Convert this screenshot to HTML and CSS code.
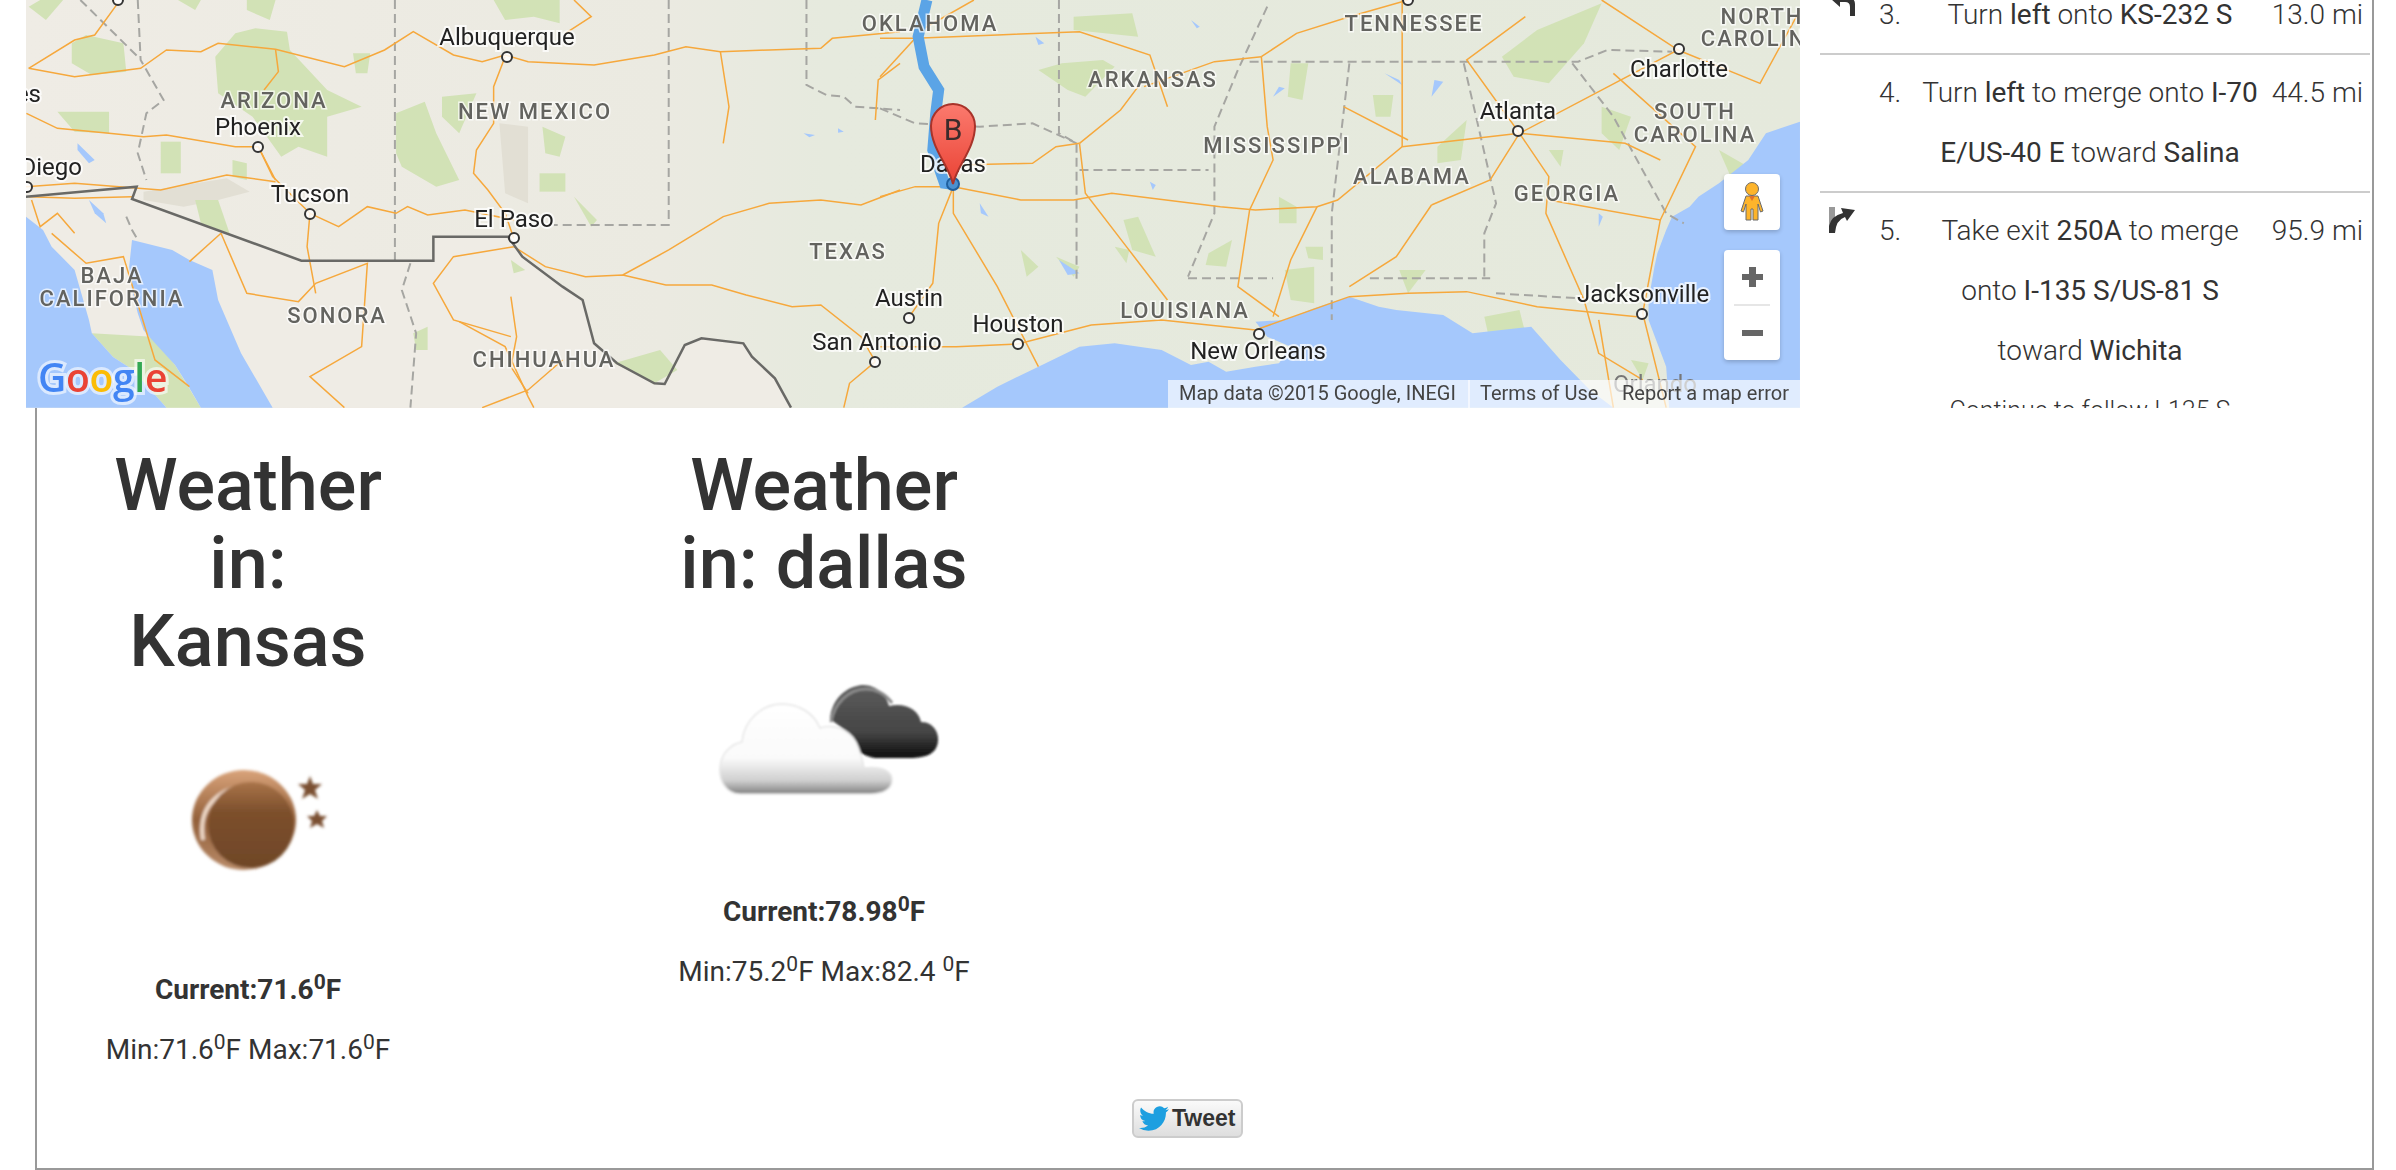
FILE: index.html
```html
<!DOCTYPE html>
<html lang="en">
<head>
    <meta charset="UTF-8">
    <title>Route and Weather</title>
    <link rel="stylesheet" href="styles.css">
</head>
<body>
    <div class="container">
        <div class="route-row">
            <div class="map">
                <svg class="map-svg" viewBox="26 0 1774 408" width="1774" height="408">
                    <defs>
                        <linearGradient id="landTone" x1="0" y1="0" x2="1" y2="0">
                            <stop offset="0" stop-color="#efece5"/>
                            <stop offset="0.36" stop-color="#ebeae1"/>
                            <stop offset="0.45" stop-color="#e6eade"/>
                            <stop offset="1" stop-color="#e5e9dc"/>
                        </linearGradient>
                        <linearGradient id="pinFill" x1="0" y1="0" x2="0" y2="1">
                            <stop offset="0" stop-color="#fb7a6e"/>
                            <stop offset="1" stop-color="#ea4335"/>
                        </linearGradient>
                    </defs>
                    <rect x="26" y="0" width="1774" height="408" fill="url(#landTone)"/>

                    <!-- west half, traced in crop coordinates -->
                    <g transform="scale(.574 .3333)">
                        <polygon class="map-mexico" points="45,590 238,560 230,597 525,782 755,782 755,710 885,710 910,770 980,860 1015,900 1035,1030 1075,1090 1140,1150 1158,1152 1193,1035 1222,1015 1295,1030 1310,1070 1350,1135 1378,1223 45,1223"/>
                        <polygon class="map-desert" points="250,575 395,535 435,575 380,600 320,620 250,600"/>
                        <polygon class="map-desert" points="870,370 920,380 920,610 880,580"/>
                        <polygon class="map-forest" points="125,130 150,105 215,130 220,215 160,225 125,190"/>
                        <polygon class="map-forest" points="410,100 445,85 500,95 505,150 570,270 630,320 570,350 570,470 520,440 490,470 440,350 380,280 375,170"/>
                        <polygon class="map-forest" points="690,340 740,305 760,400 800,540 760,560 700,500 690,460"/>
                        <polygon class="map-forest" points="280,425 315,425 315,520 280,520"/>
                        <polygon class="map-forest" points="945,380 985,410 975,470 950,460"/>
                        <polygon class="map-forest" points="940,520 985,520 985,575 940,575"/>
                        <polygon class="map-forest" points="860,0 975,0 975,70 930,50 880,60"/>
                        <polygon class="map-forest" points="70,0 110,0 80,60 50,20"/>
                        <polygon class="map-forest" points="100,335 190,335 190,400 130,395"/>
                        <polygon class="map-forest" points="770,290 830,280 800,400 770,350"/>
                        <polygon class="map-forest" points="1000,590 1040,660 1030,680"/>
                        <polygon class="map-forest" points="1070,1090 1150,1050 1180,1110 1140,1150"/>
                        <polygon class="map-forest" points="310,0 350,0 340,30"/>
                        <polygon class="map-forest" points="430,0 480,0 470,60 430,30"/>
                        <polygon class="map-forest" points="340,600 380,600 400,700 350,670"/>
                        <polygon class="map-forest" points="405,480 430,490 430,540 405,530"/>
                        <polygon class="map-forest" points="615,160 645,160 640,220 620,220"/>
                        <polygon class="map-forest" points="720,1000 745,980 745,1050 725,1050"/>
                        <polygon class="map-forest" points="890,780 915,810 895,820"/>
                        <polygon class="map-forest" points="160,1000 265,1010 305,1095 350,1223 290,1223 232,1110 197,1071"/>
                        <polygon class="map-water" points="45,650 75,690 90,740 130,810 155,960 160,1000 197,1071 232,1110 290,1223 45,1223"/>
                        <polygon class="map-water" points="230,720 300,750 330,780 370,810 380,900 395,960 420,1060 475,1223 350,1223 325,1150 305,1095 265,1020 250,990 240,940 230,870 225,800"/>
                        <polygon class="map-water" points="135,430 165,480 155,490 135,450"/>
                        <polygon class="map-water" points="155,600 180,640 185,670 165,640"/>
                        <polygon class="map-water" points="1400,400 1420,405 1410,412"/>
                        <polygon class="map-water" points="1460,385 1470,395 1460,398"/>
                        <polyline class="map-border" points="688,0 688,780"/>
                        <polyline class="map-border" points="1165,0 1165,675 965,675"/>
                        <polyline class="map-border" points="1405,0 1405,255 1440,285 1470,290 1490,320 1568,330"/>
                        <polyline class="map-border" points="140,0 240,170"/>
                        <polyline class="map-border" points="240,0 245,180 285,300 255,340 240,460 255,540"/>
                        <polyline class="map-border" points="715,790 700,870 725,1000 715,1223"/>
                        <polyline class="map-border" points="220,650 230,690 240,720"/>
                        <polyline class="map-road" points="50,205 130,230 245,205 290,150 350,155 380,130 480,148 600,200 670,150 720,95 790,165 840,185 880,165 920,185 1035,195 1140,165 1195,140 1255,155 1340,150 1430,145 1450,115 1568,95"/>
                        <polyline class="map-road" points="50,205 130,120 165,105 205,10"/>
                        <polyline class="map-road" points="880,170 860,260 860,370 830,450 825,520 850,570 880,640 895,715"/>
                        <polyline class="map-road" points="1255,155 1270,320 1260,430"/>
                        <polyline class="map-road" points="46,340 100,385 190,400 250,410 290,405 410,440 450,440 480,540"/>
                        <polyline class="map-road" points="480,148 485,215 460,270"/>
                        <polyline class="map-road" points="450,440 475,530 540,640 535,740 550,880"/>
                        <polyline class="map-road" points="45,560 130,550 280,570 395,525 480,545"/>
                        <polyline class="map-road" points="540,640 590,680 640,620 690,640 710,620 745,645 810,630 895,660"/>
                        <polyline class="map-road" points="895,740 790,770 755,850 790,960 890,1010"/>
                        <polyline class="map-road" points="1085,825 1165,750 1260,650 1340,610 1430,600 1500,615 1568,570"/>
                        <polyline class="map-road" points="895,740 950,800 1020,830 1085,825 1160,855 1240,855 1300,885 1380,920 1430,915 1500,1010 1525,1085"/>
                        <polyline class="map-road" points="1000,0 1030,50 985,100"/>
                        <polyline class="map-road" points="890,890 900,1010 890,1100 920,1180"/>
                        <polyline class="map-road" points="800,965 880,1040 920,1190 930,1223"/>
                        <polyline class="map-road" points="385,700 330,785"/>
                        <polyline class="map-road" points="385,700 430,880 520,905 550,850 640,790 630,1040 540,1130 600,1223"/>
                        <polyline class="map-road" points="50,590 130,595 230,590"/>
                        <polyline class="map-road" points="90,700 150,790 215,770 270,1080 330,1160"/>
                        <polyline class="map-road" points="1525,1085 1480,1150 1470,1223"/>
                        <polyline class="map-road" points="1568,190 1530,240 1525,360"/>
                        <polyline class="map-road" points="55,600 70,680 100,640 130,700"/>
                        <polyline class="map-road" points="980,1080 920,1170 840,1223"/>
                        <polyline class="map-route-border" points="45,590 238,560 230,597 525,782 755,782 755,710 885,710 910,770 980,860 1015,900 1035,1030 1075,1090 1140,1150 1158,1152 1193,1035 1222,1015 1295,1030 1310,1070 1350,1135 1378,1223"/>
                    </g>

                    <!-- east half -->
                    <g transform="translate(880 0) scale(.5867 .3333)">
                        <polygon class="map-forest" points="330,50 430,40 440,110 330,90"/>
                        <polygon class="map-forest" points="270,210 310,190 380,180 400,200 350,290 320,270"/>
                        <polygon class="map-forest" points="680,590 710,620 710,670 680,670"/>
                        <polygon class="map-forest" points="700,190 730,190 720,300 695,290"/>
                        <polygon class="map-forest" points="560,760 600,720 590,800 555,795"/>
                        <polygon class="map-forest" points="840,285 875,285 870,350 845,350"/>
                        <polygon class="map-forest" points="950,440 1000,360 990,480 950,490"/>
                        <polygon class="map-forest" points="1060,170 1120,90 1230,10 1200,130 1140,250 1080,230"/>
                        <polygon class="map-forest" points="1230,320 1280,350 1260,450 1230,400"/>
                        <polygon class="map-forest" points="240,750 270,800 250,830"/>
                        <polygon class="map-forest" points="300,770 340,800 330,830"/>
                        <polygon class="map-forest" points="1030,950 1090,930 1100,1000 1040,1030"/>
                        <polygon class="map-forest" points="690,810 740,800 740,910 700,900"/>
                        <polygon class="map-forest" points="1140,450 1165,450 1160,500"/>
                        <polygon class="map-forest" points="1430,450 1480,500 1450,530"/>
                        <polygon class="map-forest" points="885,810 930,810 900,880"/>
                        <polygon class="map-forest" points="415,660 440,650 470,770 430,750"/>
                        <polygon class="map-forest" points="1280,1080 1310,1090 1300,1140"/>
                        <polygon class="map-forest" points="725,740 755,740 755,780 730,775"/>
                        <polygon class="map-forest" points="400,740 425,750 420,790"/>
                        <polygon class="map-water" points="140,1223 200,1160 270,1100 340,1040 400,1030 480,1050 530,1095 560,1085 590,1115 640,1100 680,1090 700,1040 660,1010 640,965 690,960 740,925 800,890 850,920 880,930 960,945 1010,1000 1110,980 1160,1080 1210,1170 1250,1223"/>
                        <polygon class="map-water" points="1568,365 1510,400 1480,480 1430,550 1395,590 1380,620 1350,650 1340,690 1325,760 1320,800 1310,900 1310,960 1340,1100 1345,1223 1568,1223"/>
                        <polygon class="map-water" points="305,780 340,820 320,825"/>
                        <polygon class="map-water" points="680,260 690,265 670,290"/>
                        <polygon class="map-water" points="860,220 885,240 890,255"/>
                        <polygon class="map-water" points="530,60 545,80 540,85"/>
                        <polygon class="map-water" points="265,110 280,130 270,135"/>
                        <polygon class="map-water" points="945,240 960,245 940,290"/>
                        <polygon class="map-water" points="460,545 470,555 465,570"/>
                        <polygon class="map-water" points="1225,640 1232,650 1225,680"/>
                        <polygon class="map-water" points="170,610 185,650 172,640"/>
                        <polyline class="map-border" points="305,0 305,400 335,430 335,850"/>
                        <polyline class="map-border" points="340,510 560,510"/>
                        <polyline class="map-border" points="630,185 1190,185 1240,150 1350,155"/>
                        <polyline class="map-border" points="800,190 770,640 770,960"/>
                        <polyline class="map-border" points="995,190 1050,610 1030,700 1030,830"/>
                        <polyline class="map-border" points="525,835 670,835"/>
                        <polyline class="map-border" points="835,835 1040,835"/>
                        <polyline class="map-border" points="1050,880 1190,895"/>
                        <polyline class="map-border" points="660,20 610,210 570,380 570,640 525,830"/>
                        <polyline class="map-border" points="0,325 60,370 170,380 260,370 335,430"/>
                        <polyline class="map-border" points="1180,190 1250,350 1340,640 1370,670"/>
                        <polyline class="map-road" points="0,115 60,115 200,105 340,95 460,165 490,320"/>
                        <polyline class="map-road" points="0,230 60,115"/>
                        <polyline class="map-road" points="0,590 60,560 125,560 240,600 330,600 395,580 580,620 640,630 745,620 780,600 890,440 1090,400 1270,430 1330,480"/>
                        <polyline class="map-road" points="340,430 300,440 260,490 130,495"/>
                        <polyline class="map-road" points="340,430 410,330 440,260"/>
                        <polyline class="map-road" points="340,430 350,580 420,740 490,900"/>
                        <polyline class="map-road" points="125,560 125,640 200,860 270,1100"/>
                        <polyline class="map-road" points="125,560 100,670 90,850 50,950"/>
                        <polyline class="map-road" points="0,1040 130,1040 235,1032 360,975 480,960 640,990 800,890 900,880 1000,875 1120,920 1290,950"/>
                        <polyline class="map-road" points="650,170 660,380 670,480 630,630 610,860 680,950"/>
                        <polyline class="map-road" points="650,170 570,185 450,260"/>
                        <polyline class="map-road" points="650,170 710,100 800,50 900,0"/>
                        <polyline class="map-road" points="890,0 890,440"/>
                        <polyline class="map-road" points="745,620 700,780 670,950"/>
                        <polyline class="map-road" points="940,615 880,770 800,860"/>
                        <polyline class="map-road" points="940,615 1040,540 1090,400 1000,180 1100,50"/>
                        <polyline class="map-road" points="1090,400 1140,530 1135,640 1200,900 1225,1060 1300,1140"/>
                        <polyline class="map-road" points="1090,400 1360,150 1230,0"/>
                        <polyline class="map-road" points="1140,600 1330,660 1390,440 1250,220"/>
                        <polyline class="map-road" points="1330,660 1300,940 1340,1223"/>
                        <polyline class="map-road" points="1360,150 1500,250 1568,30"/>
                        <polyline class="map-road" points="790,320 900,420"/>
                        <polyline class="map-road" points="1250,1223 1225,960"/>
                        <polyline class="map-road" points="160,0 60,100"/>
                        <polyline class="map-route" points="80,0 65,110 75,200 100,270 95,340 90,450 110,550 123,553"/>
                    </g>

                    <g class="map-states">
                        <text x="274" y="108">ARIZONA</text>
                        <text x="535" y="119">NEW MEXICO</text>
                        <text x="112" y="283">BAJA</text>
                        <text x="112" y="306">CALIFORNIA</text>
                        <text x="848" y="259">TEXAS</text>
                        <text x="337" y="323">SONORA</text>
                        <text x="544" y="367">CHIHUAHUA</text>
                        <text x="930" y="31">OKLAHOMA</text>
                        <text x="1414" y="31">TENNESSEE</text>
                        <text x="1762" y="24">NORTH</text>
                        <text x="1762" y="46">CAROLINA</text>
                        <text x="1153" y="87">ARKANSAS</text>
                        <text x="1695" y="119">SOUTH</text>
                        <text x="1695" y="142">CAROLINA</text>
                        <text x="1277" y="153">MISSISSIPPI</text>
                        <text x="1412" y="184">ALABAMA</text>
                        <text x="1567" y="201">GEORGIA</text>
                        <text x="1185" y="318">LOUISIANA</text>
                    </g>
                    <g class="map-cities">
                        <text x="507" y="45">Albuquerque</text>
                        <text x="258" y="135">Phoenix</text>
                        <text class="map-end" x="41" y="102">Angeles</text>
                        <text class="map-end" x="82" y="175">San Diego</text>
                        <text x="310" y="202">Tucson</text>
                        <text x="514" y="227">El Paso</text>
                        <text x="909" y="306">Austin</text>
                        <text x="877" y="350">San Antonio</text>
                        <text x="1679" y="77">Charlotte</text>
                        <text x="1518" y="119">Atlanta</text>
                        <text x="953" y="172">Dallas</text>
                        <text x="1643" y="302">Jacksonville</text>
                        <text x="1018" y="332">Houston</text>
                        <text x="1258" y="359">New Orleans</text>
                    </g>
                    <g class="map-dots">
                        <circle cx="507" cy="57" r="5"/>
                        <circle cx="258" cy="147" r="5"/>
                        <circle cx="310" cy="214" r="5"/>
                        <circle cx="514" cy="238" r="5"/>
                        <circle cx="27" cy="187" r="5"/>
                        <circle cx="118" cy="0" r="5"/>
                        <circle cx="875" cy="362" r="5"/>
                        <circle cx="909" cy="318" r="5"/>
                        <circle cx="1018" cy="344" r="5"/>
                        <circle cx="1259" cy="334" r="5"/>
                        <circle cx="1518" cy="131" r="5"/>
                        <circle cx="1679" cy="49" r="5"/>
                        <circle cx="1642" cy="314" r="5"/>
                        <circle cx="1408" cy="0" r="5"/>
                    </g>

                    <!-- route end and marker -->
                    <circle cx="953" cy="184" r="6" fill="#4a90d0" stroke="#1f5f9e" stroke-width="2"/>
                    <path d="M953 184 C949 166 931 148 931 126 A22 22 0 0 1 975 126 C975 148 957 166 953 184 Z" fill="url(#pinFill)" stroke="#a8332a" stroke-width="2"/>
                    <text class="map-pin-label" x="953" y="140">B</text>

                    <!-- logo -->
                    <text class="map-logo" x="38" y="392"><tspan fill="#4285f4">G</tspan><tspan fill="#ea4335">o</tspan><tspan fill="#fbbc05">o</tspan><tspan fill="#4285f4">g</tspan><tspan fill="#34a853">l</tspan><tspan fill="#ea4335">e</tspan></text>

                    <!-- attribution -->
                    <text class="map-orlando" x="1655" y="392">Orlando</text>
                    <rect x="1168" y="380" width="632" height="28" fill="#fff" fill-opacity=".65"/>
                    <rect x="1468" y="380" width="2" height="28" fill="#fff" fill-opacity=".6"/>
                    <text class="map-attr" x="1179" y="400">Map data ©2015 Google, INEGI</text>
                    <text class="map-attr" x="1480" y="400">Terms of Use</text>
                    <text class="map-attr" x="1622" y="400">Report a map error</text>
                </svg>

                <div class="map-control pegman-tile">
                    <svg width="26" height="42" viewBox="0 0 26 42">
                        <circle cx="13" cy="8" r="6.5" fill="#fdb42b" stroke="#6b6b6b" stroke-width="1"/>
                        <path d="M7 15 H19 L24 30 L21.5 31 L19 23 V39 H14 V28 H12 V39 H7 V23 L4.5 31 L2 30 Z" fill="#fdb42b" stroke="#6b6b6b" stroke-width="1"/>
                        <path d="M10 15 H16 L13 20 Z" fill="#e2712b"/>
                    </svg>
                </div>
                <div class="map-control zoom-tile">
                    <div class="zoom-btn"><span class="zoom-plus"></span></div>
                    <div class="zoom-sep"></div>
                    <div class="zoom-btn"><span class="zoom-minus"></span></div>
                </div>
            </div>

            <div class="directions">
                <table class="steps">
                    <tr>
                        <td class="step-icon">
                            <svg class="turn-svg" width="30" height="28" viewBox="0 0 30 28">
                                <path d="M26 28 V16 Q26 9 16 9 H11 V3 L2 11 L11 19 V14 H16 Q21 14 21 19 V28 Z" fill="#333"/>
                            </svg>
                        </td>
                        <td class="step-num">3.</td>
                        <td class="step-text">Turn <b>left</b> onto <b>KS-232 S</b></td>
                        <td class="step-dist">13.0 mi</td>
                    </tr>
                    <tr>
                        <td class="step-icon"></td>
                        <td class="step-num">4.</td>
                        <td class="step-text">Turn <b>left</b> to merge onto <b>I-70 E/US-40 E</b> toward <b>Salina</b></td>
                        <td class="step-dist">44.5 mi</td>
                    </tr>
                    <tr>
                        <td class="step-icon">
                            <svg class="turn-svg-right" width="28" height="27" viewBox="0 0 28 27">
                                <rect x="0" y="0" width="6" height="26" fill="#999"/>
                                <path d="M0 26 V19 Q2 9 14 6 L12 1 L26 3 L18 14 L16 10 Q7 13 6 26 Z" fill="#333"/>
                            </svg>
                        </td>
                        <td class="step-num">5.</td>
                        <td class="step-text">Take exit <b>250A</b> to merge onto <b>I-135 S/US-81 S</b><br>toward <b>Wichita</b>
                            <div class="step-more">Continue to follow I-135 S</div>
                        </td>
                        <td class="step-dist">95.9 mi</td>
                    </tr>
                </table>
            </div>
        </div>

        <div class="weather-row">
            <div class="weather-col">
                <h1>Weather in: Kansas</h1>
                <svg class="weather-icon" width="200" height="259" viewBox="-1 -21 200 259">
                    <defs>
                        <linearGradient id="moonOuter" x1="0" y1="0" x2="0" y2="1">
                            <stop offset="0" stop-color="#d9a37a"/>
                            <stop offset="0.5" stop-color="#93603a"/>
                            <stop offset="1" stop-color="#b88a68"/>
                        </linearGradient>
                        <linearGradient id="moonInner" x1="0" y1="0" x2="0" y2="1">
                            <stop offset="0" stop-color="#a97449"/>
                            <stop offset="0.35" stop-color="#7c4f2c"/>
                            <stop offset="1" stop-color="#6f4627"/>
                        </linearGradient>
                        <filter id="softIcon"><feGaussianBlur stdDeviation="1.6"/></filter>
                    </defs>
                    <g filter="url(#softIcon)">
                        <ellipse cx="95" cy="98" rx="52" ry="50" fill="url(#moonOuter)"/>
                        <path d="M54 118 C48 82 74 60 114 64" fill="none" stroke="#efd9c8" stroke-width="4"/>
                        <circle cx="102" cy="103" r="43" fill="url(#moonInner)"/>
                        <polygon points="161,54 164,62 173,62 166,68 169,77 161,72 153,77 156,68 149,62 158,62" fill="#7a4f30"/>
                        <polygon points="168,88 171,94 178,94 173,99 175,106 168,102 161,106 163,99 158,94 165,94" fill="#7a4f30"/>
                    </g>
                </svg>
                <p class="current">Current:71.6<sup>0</sup>F</p>
                <p class="range">Min:71.6<sup>0</sup>F Max:71.6<sup>0</sup>F</p>
            </div>
            <div class="weather-col">
                <h1>Weather in: dallas</h1>
                <svg class="weather-icon" width="240" height="259" viewBox="-2 -36 240 259">
                    <defs>
                        <linearGradient id="cloudLight" x1="0" y1="0" x2="0" y2="1">
                            <stop offset="0" stop-color="#fff"/>
                            <stop offset="0.6" stop-color="#fafafa"/>
                            <stop offset="0.85" stop-color="#cfcfcf"/>
                            <stop offset="1" stop-color="#808080"/>
                        </linearGradient>
                        <linearGradient id="cloudDark" x1="0" y1="0" x2="0" y2="1">
                            <stop offset="0" stop-color="#5c5c5c"/>
                            <stop offset="0.65" stop-color="#454545"/>
                            <stop offset="1" stop-color="#0c0c0c"/>
                        </linearGradient>
                        <filter id="softCloud"><feGaussianBlur stdDeviation="1.3"/></filter>
                    </defs>
                    <g filter="url(#softCloud)">
                        <path d="M133 61 C135 40 150 28 166 27 C180 27 190 38 192 48 C208 44 222 52 224 64 C238 64 244 78 240 88 C236 98 226 100 210 100 L178 100 C158 96 150 84 148 72 Z" fill="url(#cloudDark)" transform="translate(-9 -1)"/>
                        <path d="M125 63 C128 45 142 30 160 30 C172 30 180 36 186 44" fill="none" stroke="#8a8a8a" stroke-width="3"/>
                        <path d="M34 134 C20 134 13 120 14 108 C15 92 26 84 36 82 C38 60 56 44 76 44 C94 44 108 54 114 68 C126 64 142 68 150 82 C154 90 156 98 158 108 C178 106 186 112 186 120 C186 130 176 134 164 134 Z" fill="url(#cloudLight)" stroke="#e6e6e6" stroke-width="1.5" transform="translate(0 1)"/>
                    </g>
                </svg>
                <p class="current">Current:78.98<sup>0</sup>F</p>
                <p class="range">Min:75.2<sup>0</sup>F Max:82.4 <sup>0</sup>F</p>
            </div>
        </div>

        <a class="tweet" href="#">
            <svg width="30" height="25" viewBox="0 2 24 20"><path d="M23.95 4.57a10 10 0 0 1-2.82.77 4.96 4.96 0 0 0 2.16-2.72c-.95.55-2 .95-3.12 1.17a4.92 4.92 0 0 0-8.38 4.48C7.69 8.09 4.07 6.13 1.64 3.16a4.82 4.82 0 0 0-.66 2.47c0 1.71.87 3.21 2.19 4.1a4.9 4.9 0 0 1-2.23-.61v.06a4.92 4.92 0 0 0 3.95 4.83 4.9 4.9 0 0 1-2.21.08 4.94 4.94 0 0 0 4.6 3.42A9.87 9.87 0 0 1 0 19.54a13.94 13.94 0 0 0 7.55 2.21c9.06 0 14-7.5 14-13.98 0-.21 0-.42-.02-.63a9.94 9.94 0 0 0 2.46-2.55z" fill="#1d9fe0"/></svg>
            Tweet
        </a>
    </div>
</body>
</html>
```

FILE: styles.css
```css
html, body {
    margin: 0;
    height: 100%;
    overflow: hidden;
    background-color: white;
}
body {
    font-family: Roboto, Arial, sans-serif;
    color: #333;
}
.container {
    box-sizing: border-box;
    width: 2339px;
    height: 1170px;
    margin-left: 35px;
    border: 2px solid #999;
    border-top: none;
}
.route-row {
    display: flex;
    height: 408px;
    margin-left: -11px;
}

/* map */
.map {
    position: relative;
    width: 1774px;
    height: 408px;
    flex: none;
    overflow: hidden;
}
.map-svg {
    display: block;
    filter: blur(0.4px);
}
.map-water {
    fill: #a5c8fc;
}
.map-forest {
    fill: #d2e2b6;
    filter: blur(1px);
}
.map-desert {
    fill: #e2dfd4;
}
.map-mexico {
    fill: #efece5;
}
.map-road, .map-border, .map-route, .map-route-border {
    fill: none;
    vector-effect: non-scaling-stroke;
}
.map-road {
    stroke: #f6a83c;
    stroke-width: 1.5;
}
.map-border {
    stroke: #a6a6a2;
    stroke-width: 2;
    stroke-dasharray: 9 5;
}
.map-route {
    stroke: #5ba4e6;
    stroke-width: 11;
}
.map-route-border {
    stroke: #696966;
    stroke-width: 2.5;
}
.map-states text {
    font-size: 22px;
    font-weight: 500;
    letter-spacing: 2px;
    fill: #63635f;
    text-anchor: middle;
    stroke: #fff;
    stroke-opacity: .7;
    stroke-width: 3px;
    paint-order: stroke;
}
.map-cities text {
    font-size: 24px;
    fill: #222;
    text-anchor: middle;
    stroke: #fff;
    stroke-opacity: .75;
    stroke-width: 4px;
    paint-order: stroke;
}
.map-cities .map-end {
    text-anchor: end;
}
.map-dots circle {
    fill: #fff;
    fill-opacity: .85;
    stroke: #333;
    stroke-width: 2;
}
.map-pin-label {
    font-size: 30px;
    fill: #3b2b2b;
    text-anchor: middle;
}
.map-logo {
    font-family: "Open Sans", Roboto, sans-serif;
    font-size: 39px;
    font-weight: 600;
    letter-spacing: -.3px;
    stroke: #fff;
    stroke-opacity: .6;
    stroke-width: 6px;
    paint-order: stroke;
}
.map-attr {
    font-size: 20px;
    fill: #444;
}
.map-orlando {
    font-size: 24px;
    fill: #777;
    text-anchor: middle;
}
.map-control {
    position: absolute;
    left: 1698px;
    width: 56px;
    background-color: white;
    border-radius: 4px;
    box-shadow: 0 2px 4px rgba(0, 0, 0, 0.2);
}
.pegman-tile {
    top: 174px;
    height: 56px;
    display: flex;
    align-items: center;
    justify-content: center;
}
.zoom-tile {
    top: 250px;
    height: 110px;
    display: flex;
    flex-direction: column;
    align-items: center;
}
.zoom-btn {
    flex: 1;
    display: flex;
    align-items: center;
    justify-content: center;
}
.zoom-sep {
    width: 36px;
    height: 2px;
    background-color: #e6e6e6;
}
.zoom-plus, .zoom-minus {
    position: relative;
    display: block;
    width: 21px;
    height: 6px;
    background-color: #666;
}
.zoom-plus::after {
    content: "";
    position: absolute;
    left: 7px;
    top: -7px;
    width: 7px;
    height: 20px;
    background-color: #666;
}

/* directions */
.directions {
    width: 550px;
    height: 408px;
    margin-left: 20px;
    overflow: hidden;
    flex: none;
}
.steps {
    width: 550px;
    margin-top: -23px;
    border-collapse: collapse;
    table-layout: fixed;
    font-size: 28px;
    font-weight: 300;
    line-height: 60px;
}
.steps tr {
    border-bottom: 2px solid #ccc;
}
.steps td {
    padding: 8px 0;
    vertical-align: top;
}
.steps b {
    font-weight: 400;
}
.step-icon {
    width: 59px;
    position: relative;
}
.step-num {
    width: 36px;
}
.step-text {
    width: 350px;
    text-align: center;
}
.step-more {
    font-size: 25px;
}
.step-dist {
    padding-right: 7px !important;
    text-align: right;
}
.turn-svg {
    position: absolute;
    left: 9px;
    top: 11px;
}
.turn-svg-right {
    position: absolute;
    left: 9px;
    top: 14px;
}

/* weather */
.weather-row {
    display: flex;
    gap: 276px;
    padding-left: 61px;
}
.weather-col {
    width: 300px;
    text-align: center;
}
.weather-col h1 {
    margin: 39px 0 20px;
    font-size: 72px;
    font-weight: 500;
    line-height: 78px;
}
.weather-icon {
    display: block;
    margin: 0 auto;
}
.current, .range {
    margin: 0;
    font-size: 28px;
    line-height: 60px;
}
.current {
    font-weight: 700;
}
sup {
    font-size: 75%;
    line-height: 0;
    vertical-align: baseline;
    position: relative;
    top: -0.5em;
}

/* tweet button */
.tweet {
    position: absolute;
    left: 1132px;
    top: 1099px;
    box-sizing: border-box;
    width: 111px;
    height: 39px;
    display: flex;
    align-items: center;
    gap: 3px;
    padding-left: 5px;
    border: 2px solid #ccc;
    border-radius: 6px;
    background: linear-gradient(#fafafa, #dedede);
    font-family: "Liberation Sans", Arial, sans-serif;
    font-size: 23px;
    font-weight: bold;
    color: #333;
    text-decoration: none;
}
```
